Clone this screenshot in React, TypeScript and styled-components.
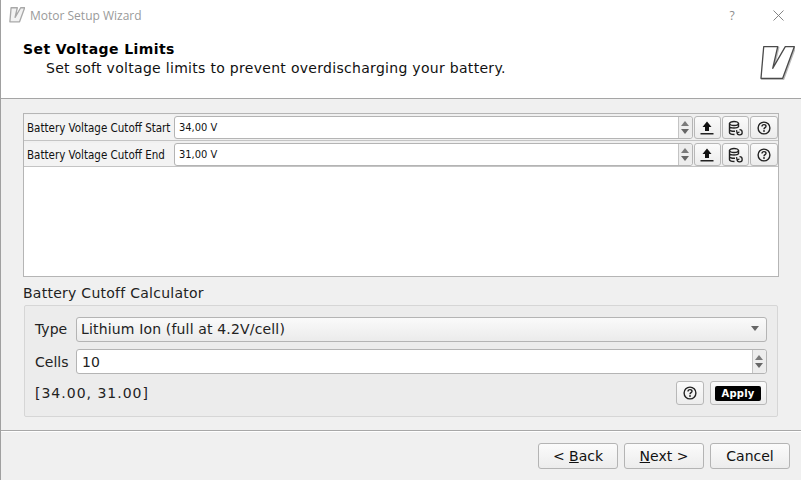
import React from "react";
import styled, { createGlobalStyle } from "styled-components";

const Global = createGlobalStyle`
  html, body { margin: 0; padding: 0; width: 801px; height: 480px; overflow: hidden; background: #f0f0f0; }
  * { box-sizing: border-box; }
`;

const Window = styled.div`
  width: 801px; height: 480px; display: flex; flex-direction: column;
  background: #f0f0f0; border-left: 1px solid #a0a0a0;
  font-family: "DejaVu Sans", sans-serif; color: #111;
`;
const Top = styled.div`
  height: 99px; flex: none; background: #fff; border-bottom: 1px solid #a5a5a5;
  display: flex; flex-direction: column;
`;
const TitleBar = styled.div`
  height: 30px; display: flex; align-items: center; padding-left: 8px; flex: none;
`;
const WindowTitle = styled.span`
  font: 12px "Open Sans", sans-serif; color: #9a9a9a; margin-left: 5px; flex: 1;
`;
const TitleGlyph = styled.span<{ $w: number }>`
  width: ${p => p.$w}px; display: flex; justify-content: center; color: #8c8c8c;
  font: 12px "Open Sans", sans-serif;
`;
const HeaderRow = styled.div`
  flex: 1; display: flex; justify-content: space-between; padding: 10px 6px 0 22px;
`;
const HeadTitle = styled.div`
  font-size: 14px; font-weight: 700; line-height: 19px; letter-spacing: 0.42px; color: #000;
`;
const HeadSub = styled.div`
  font-size: 14px; line-height: 19px; letter-spacing: 0.3px; padding-left: 23px; color: #111;
`;
const LogoSlot = styled.div`
  margin-top: 5px; flex: none; display: flex;
`;
const Body = styled.div`
  flex: 1; padding: 14px 22px 0; display: flex; flex-direction: column;
`;
const Table = styled.div`
  height: 164px; background: #fff; border: 1px solid #b5b5b5; display: flex; flex-direction: column;
`;
const ParamRow = styled.div`
  height: 26px; display: flex; align-items: center; background: #f0f0f0;
  border-bottom: 1px solid #c4c4c4; flex: none;
  &:first-child { height: 27px; padding-top: 1px; }
  &:nth-child(2) { padding-top: 2px; }
`;
const ParamLabel = styled.div`
  width: 150px; height: 100%; flex: none; padding-left: 3px; display: flex; align-items: center;
  font-size: 11.5px; font-stretch: condensed; font-family: "DejaVu Sans Condensed", "DejaVu Sans", sans-serif;
  color: #111; background: #f3f3f3;
`;
const Spin = styled.div<{ $tall?: boolean }>`
  flex: 1; height: ${p => (p.$tall ? 25 : 23)}px; background: #fff; border: 1px solid #b4b4b4; border-radius: 3px;
  display: flex; align-items: stretch; margin-right: ${p => (p.$tall ? 0 : 1)}px;
`;
const SpinText = styled.div<{ $big?: boolean }>`
  flex: 1; display: flex; align-items: center; padding-left: ${p => (p.$big ? 5 : 4)}px;
  font-size: ${p => (p.$big ? 14 : 11)}px;
  font-family: ${p => (p.$big ? '"DejaVu Sans"' : '"DejaVu Sans Condensed", "DejaVu Sans"')}, sans-serif;
`;
const SpinArrows = styled.div`
  width: 14px; flex: none; background: #ededed; border-left: 1px solid #c4c4c4; padding-right: 1px;
  display: flex; flex-direction: column; align-items: center; justify-content: center; gap: 3px;
  border-radius: 0 3px 3px 0;
`;
const Arrow = styled.span<{ $up?: boolean }>`
  width: 0; height: 0; border-left: 4px solid transparent; border-right: 4px solid transparent;
  ${p => (p.$up ? "border-bottom: 5px solid #7a7a7a;" : "border-top: 5px solid #666;")}
`;
const ToolButton = styled.div<{ $w?: number; $h?: number; $flush?: boolean }>`
  width: ${p => p.$w ?? 27}px; height: ${p => p.$h ?? 23}px; flex: none; margin-right: ${p => (p.$flush ? 0 : 1)}px;
  border: 1px solid #b8b8b8; border-radius: 3px; padding-right: 1px;
  background: linear-gradient(#fbfbfb, #ececec);
  display: flex; align-items: center; justify-content: center;
`;
const GroupTitle = styled.div`
  font-size: 14px; letter-spacing: 0.26px; margin-top: 8px; height: 20px; line-height: 17px; color: #222;
`;
const Group = styled.div`
  height: 112px; margin: 0 1px; background: #ececec; border: 1px solid #d6d6d6; border-radius: 2px;
  padding: 11px 10px 0; display: flex; flex-direction: column; gap: 7px;
`;
const GroupRow = styled.div`
  display: flex; align-items: center; height: 25px; gap: 5px; flex: none;
  font-size: 14px; color: #222;
`;
const RowLabel = styled.span<{ $lift?: boolean }>`
  width: 36px; flex: none; padding-bottom: ${p => (p.$lift ? 2 : 0)}px;
`;
const Combo = styled.div`
  flex: 1; height: 25px; border: 1px solid #b4b4b4; border-radius: 3px;
  background: linear-gradient(#fafafa, #ebebeb); display: flex; align-items: center; justify-content: space-between;
  padding: 0 7px 2px 4px; font-size: 14px; letter-spacing: 0.16px;
`;
const BottomRow = styled.div`
  display: flex; align-items: center; height: 24px; gap: 6px;
`;
const Result = styled.span`
  flex: 1; font-size: 14px; letter-spacing: 1px; color: #222;
`;
const ApplyTag = styled.span`
  background: #000; color: #fff; font-size: 10px; font-weight: 700; border-radius: 2px;
  padding: 1px 6px; line-height: 13px; letter-spacing: 0.2px;
`;
const Footer = styled.div`
  height: 50px; flex: none; border-top: 1px solid #a8a8a8; display: flex; justify-content: flex-end;
  align-items: flex-start; padding: 12px 11px 0 0; gap: 6px; background: #f0f0f0;
  box-shadow: inset 0 1px 0 #fff;
`;
const NavButton = styled.div`
  width: 80px; height: 26px; border: 1px solid #b4b4b4; border-radius: 3px;
  background: linear-gradient(#fbfbfb, #ececec); display: flex; align-items: center; justify-content: center;
  font-size: 14px; color: #111; white-space: pre;
`;
const Key = styled.span`
  text-decoration: underline;
`;

const LOGO = "M4.7 1.7 H18.7 L13.7 23.3 L26.3 1.7 H35.3 L23.7 33.3 H2 Z";
const BigLogo = () => (
  <svg width="36" height="36" viewBox="0 0 36 36" fill="none">
    <path d={LOGO} fill="none" stroke="#bbb" strokeWidth="2" transform="translate(0.7 0.8)" strokeLinejoin="round" />
    <path d={LOGO} fill="#fff" stroke="#4a4a4a" strokeWidth="1.3" strokeLinejoin="round" />
  </svg>
);
const SmallLogo = () => (
  <svg width="16" height="16" viewBox="0 0 36 36" fill="none">
    <path d={LOGO} fill="#f2f2f2" stroke="#a8a8a8" strokeWidth="3" strokeLinejoin="round" />
  </svg>
);
const Upload = () => (
  <svg width="16" height="16" viewBox="0 0 16 16">
    <path d="M8 1.5 L12.5 7 H10 V11 H6 V7 H3.5 Z" fill="#111" />
    <rect x="1.5" y="13" width="13" height="1.5" fill="#222" />
  </svg>
);
const Database = () => (
  <svg width="16" height="16" viewBox="0 0 16 16" fill="none" stroke="#222" strokeWidth="1.4">
    <ellipse cx="7" cy="3.5" rx="4.5" ry="2" />
    <path d="M2.5 3.5 V12.5 C2.5 14 5 14.5 7.5 14.5 M11.5 3.5 V7 M2.5 6.5 C2.5 8.5 11.5 8.5 11.5 6.5 M2.5 9.5 C2.5 11 5.5 11.5 8 11.2" />
    <path d="M10 12.5 A2.6 2.6 0 1 0 12.5 9.7 M9.5 10.2 L10.1 12.8 L12.5 12" strokeWidth="1.3" />
  </svg>
);
const Help = () => (
  <svg width="16" height="16" viewBox="0 0 16 16" fill="none" stroke="#222">
    <circle cx="8" cy="8" r="5.9" strokeWidth="1.4" />
    <path d="M6 6.4 C6 5 7 4.6 8 4.6 C9.2 4.6 10 5.3 10 6.2 C10 7.6 8 7.7 8 9.3" strokeWidth="1.4" />
    <circle cx="8" cy="11" r="0.9" fill="#222" stroke="none" />
  </svg>
);

const params = [
  { label: "Battery Voltage Cutoff Start", value: "34,00 V" },
  { label: "Battery Voltage Cutoff End", value: "31,00 V" },
];

export default function App() {
  return (
    <Window>
      <Global />
      <Top>
        <TitleBar>
          <SmallLogo />
          <WindowTitle>Motor Setup Wizard</WindowTitle>
          <TitleGlyph $w={46}>?</TitleGlyph>
          <TitleGlyph $w={46}>
            <svg width="11" height="11" viewBox="0 0 11 11" stroke="#777" strokeWidth="0.9"><path d="M0.5 0.5 L10.5 10.5 M10.5 0.5 L0.5 10.5" /></svg>
          </TitleGlyph>
        </TitleBar>
        <HeaderRow>
          <div>
            <HeadTitle>Set Voltage Limits</HeadTitle>
            <HeadSub>Set soft voltage limits to prevent overdischarging your battery.</HeadSub>
          </div>
          <LogoSlot><BigLogo /></LogoSlot>
        </HeaderRow>
      </Top>
      <Body>
        <Table>
          {params.map(p => (
            <ParamRow key={p.label}>
              <ParamLabel>{p.label}</ParamLabel>
              <Spin>
                <SpinText>{p.value}</SpinText>
                <SpinArrows><Arrow $up /><Arrow /></SpinArrows>
              </Spin>
              <ToolButton><Upload /></ToolButton>
              <ToolButton><Database /></ToolButton>
              <ToolButton $w={28} $flush><Help /></ToolButton>
            </ParamRow>
          ))}
        </Table>
        <GroupTitle>Battery Cutoff Calculator</GroupTitle>
        <Group>
          <GroupRow>
            <RowLabel $lift>Type</RowLabel>
            <Combo>
              Lithium Ion (full at 4.2V/cell)
              <Arrow />
            </Combo>
          </GroupRow>
          <GroupRow>
            <RowLabel>Cells</RowLabel>
            <Spin $tall>
              <SpinText $big>10</SpinText>
              <SpinArrows><Arrow $up /><Arrow /></SpinArrows>
            </Spin>
          </GroupRow>
          <BottomRow>
            <Result>[34.00, 31.00]</Result>
            <ToolButton $w={28} $h={24} $flush><Help /></ToolButton>
            <ToolButton $w={57} $h={24} $flush><ApplyTag>Apply</ApplyTag></ToolButton>
          </BottomRow>
        </Group>
      </Body>
      <Footer>
        <NavButton>{"< "}<Key>B</Key>ack</NavButton>
        <NavButton><Key>N</Key>ext {">"}</NavButton>
        <NavButton>Cancel</NavButton>
      </Footer>
    </Window>
  );
}
